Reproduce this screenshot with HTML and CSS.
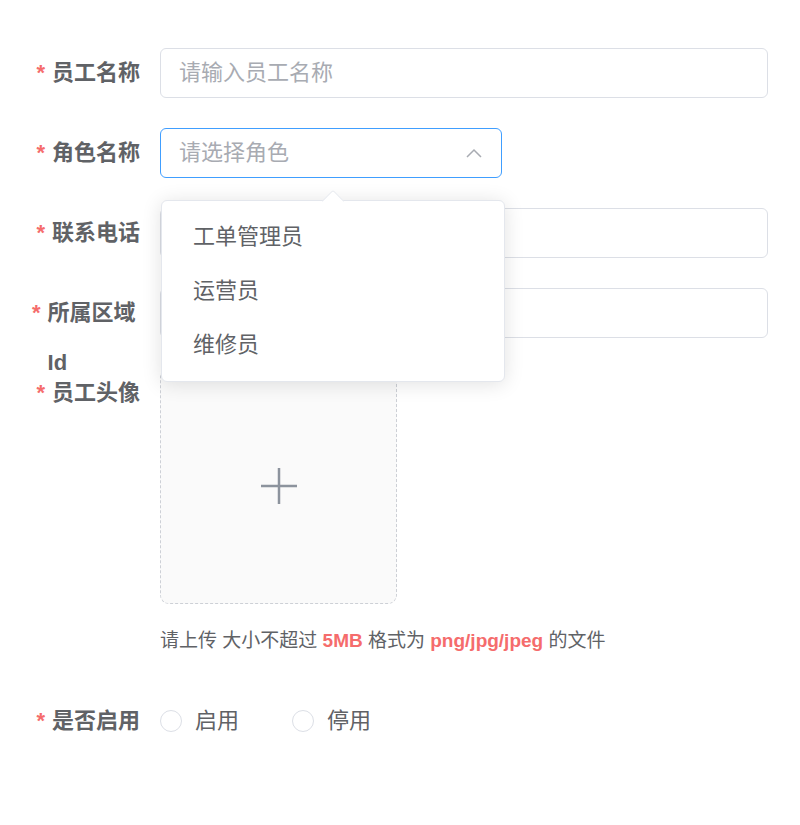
FILE: index.html
```html
<!DOCTYPE html>
<html lang="zh-CN">
<head>
<meta charset="utf-8">
<title>员工表单</title>
<link rel="stylesheet" href="styles.css">
</head>
<body>
<form class="form">
  <div class="form-item">
    <div class="label"><span class="req">*</span><span class="label-text">员工名称</span></div>
    <div class="control">
      <div class="input"><span class="placeholder">请输入员工名称</span></div>
    </div>
  </div>

  <div class="form-item">
    <div class="label"><span class="req">*</span><span class="label-text">角色名称</span></div>
    <div class="control">
      <div class="select-wrap">
        <div class="input select is-focus">
          <span class="placeholder">请选择角色</span>
          <svg class="chevron" width="16" height="10" viewBox="0 0 16 10"><polyline points="1,9 8,2 15,9" fill="none" stroke="#a8abb2" stroke-width="1.5"/></svg>
        </div>
        <div class="dropdown">
          <div class="dropdown-arrow"></div>
          <ul class="options">
            <li class="option">工单管理员</li>
            <li class="option">运营员</li>
            <li class="option">维修员</li>
          </ul>
        </div>
      </div>
    </div>
  </div>

  <div class="form-item">
    <div class="label"><span class="req">*</span><span class="label-text">联系电话</span></div>
    <div class="control">
      <div class="input"></div>
    </div>
  </div>

  <div class="form-item">
    <div class="label"><span class="req">*</span><span class="label-text">所属区域Id</span></div>
    <div class="control">
      <div class="input"></div>
    </div>
  </div>

  <div class="form-item">
    <div class="label"><span class="req">*</span><span class="label-text">员工头像</span></div>
    <div class="control">
      <div class="upload">
        <svg width="40" height="40" viewBox="0 0 40 40"><line x1="2" y1="20" x2="38" y2="20" stroke="#8c939d" stroke-width="2.5"/><line x1="20" y1="2" x2="20" y2="38" stroke="#8c939d" stroke-width="2.5"/></svg>
      </div>
      <div class="tip">请上传 大小不超过 <b>5MB</b> 格式为 <b>png/jpg/jpeg</b> 的文件</div>
    </div>
  </div>

  <div class="form-item">
    <div class="label"><span class="req">*</span><span class="label-text">是否启用</span></div>
    <div class="control radios">
      <label class="radio"><span class="radio-circle"></span><span class="radio-label">启用</span></label>
      <label class="radio"><span class="radio-circle"></span><span class="radio-label">停用</span></label>
    </div>
  </div>
</form>
</body>
</html>
```

FILE: styles.css
```css
html, body {
  margin: 0;
  padding: 0;
  background: #ffffff;
}

body {
  font-family: "Liberation Sans", "Noto Sans CJK SC", sans-serif;
  color: #606266;
}

.form {
  padding: 48px 32px 0 32px;
}

.form-item {
  display: flex;
  align-items: flex-start;
  margin-bottom: 30px;
}

.label {
  flex: none;
  width: 120px;
  height: 50px;
  box-sizing: border-box;
  padding-right: 12px;
  margin-right: 8px;
  display: flex;
  justify-content: flex-end;
  align-items: flex-start;
  line-height: 50px;
  font-size: 22px;
  font-weight: bold;
  color: #606266;
}

.req {
  color: #f56c6c;
  margin-right: 7px;
  flex: none;
}

.control {
  flex: 1;
  min-width: 0;
}

.input {
  height: 50px;
  box-sizing: border-box;
  border: 1px solid #dcdfe6;
  border-radius: 6px;
  padding: 0 18px;
  display: flex;
  align-items: center;
  font-size: 22px;
  line-height: 48px;
  background: #ffffff;
}

.placeholder {
  color: #a8abb2;
  flex: 1;
  line-height: 48px;
}

.select-wrap {
  position: relative;
  width: 342px;
}

.select.is-focus {
  border-color: #409eff;
}

.chevron {
  flex: none;
  margin-right: 1px;
}

.dropdown {
  position: absolute;
  left: 1px;
  top: 72px;
  width: 344px;
  box-sizing: border-box;
  background: #ffffff;
  border: 1px solid #e4e7ed;
  border-radius: 6px;
  box-shadow: 0 2px 20px rgba(0, 0, 0, 0.12);
  z-index: 10;
}

.dropdown-arrow {
  position: absolute;
  top: -8px;
  left: 163px;
  width: 15px;
  height: 15px;
  background: #ffffff;
  border-top: 1px solid #e4e7ed;
  border-left: 1px solid #e4e7ed;
  transform: rotate(45deg);
  border-top-left-radius: 2px;
}

.options {
  list-style: none;
  margin: 0;
  padding: 9px 0;
  position: relative;
}

.option {
  height: 54px;
  line-height: 54px;
  padding: 0 31px;
  font-size: 22px;
  color: #606266;
}

.upload {
  width: 237px;
  height: 236px;
  box-sizing: border-box;
  border: 1px dashed #cdd0d6;
  border-radius: 9px;
  background: #fafafa;
  display: flex;
  align-items: center;
  justify-content: center;
}

.tip {
  padding: 16px 0 4px;
  line-height: 42px;
  font-size: 19px;
  color: #606266;
}

.tip b {
  color: #f56c6c;
  font-weight: bold;
}

.radios {
  display: flex;
  align-items: center;
  height: 50px;
}

.radio {
  display: flex;
  align-items: center;
  margin-right: 53px;
  height: 50px;
}

.radio-circle {
  width: 22px;
  height: 22px;
  box-sizing: border-box;
  border: 1px solid #dcdfe6;
  border-radius: 50%;
  background: #ffffff;
}

.radio-label {
  padding-left: 13px;
  font-size: 22px;
  line-height: 50px;
  color: #606266;
}
```
